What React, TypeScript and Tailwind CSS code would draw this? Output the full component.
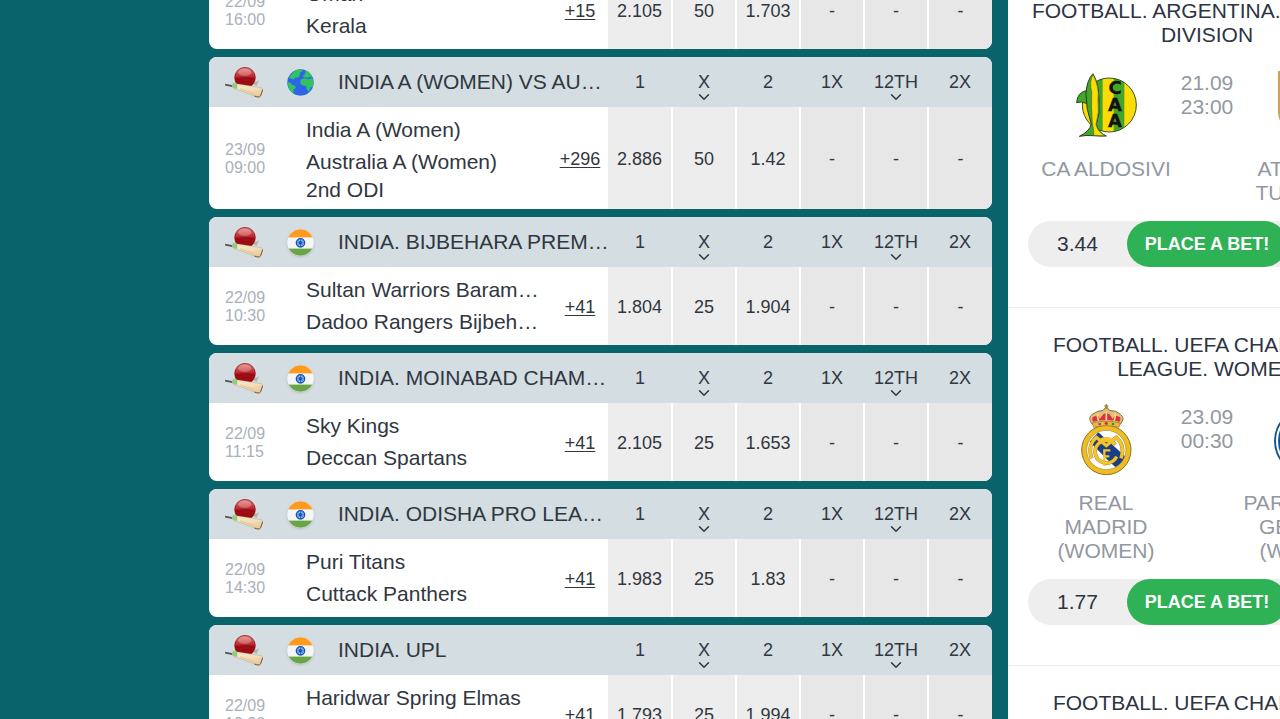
import React from "react";
import { ChevronDown } from "lucide-react";

interface Match {
  league?: string;
  flag?: "india" | "world";
  date: string;
  time: string;
  home: string;
  away: string;
  note?: string;
  more: string;
  odds: string[];
}

interface Promo {
  title: string;
  date: string;
  time: string;
  home: string;
  away: string;
  homeLogo: React.ReactNode;
  awayLogo: React.ReactNode;
  homeOdd: string;
  awayOdd: string;
}

const markets = [
  { label: "1" },
  { label: "X", menu: true },
  { label: "2" },
  { label: "1X" },
  { label: "12TH", menu: true },
  { label: "2X" },
];

const matches: Match[] = [
  { date: "22/09", time: "16:00", home: "Oman", away: "Kerala", more: "+15", odds: ["2.105", "50", "1.703", "-", "-", "-"] },
  { league: "INDIA A (WOMEN) VS AUSTRALIA A (WOMEN)", flag: "world", date: "23/09", time: "09:00", home: "India A (Women)", away: "Australia A (Women)", note: "2nd ODI", more: "+296", odds: ["2.886", "50", "1.42", "-", "-", "-"] },
  { league: "INDIA. BIJBEHARA PREMIER LEAGUE", flag: "india", date: "22/09", time: "10:30", home: "Sultan Warriors Baramulla", away: "Dadoo Rangers Bijbehara", more: "+41", odds: ["1.804", "25", "1.904", "-", "-", "-"] },
  { league: "INDIA. MOINABAD CHAMPIONS LEAGUE", flag: "india", date: "22/09", time: "11:15", home: "Sky Kings", away: "Deccan Spartans", more: "+41", odds: ["2.105", "25", "1.653", "-", "-", "-"] },
  { league: "INDIA. ODISHA PRO LEAGUE", flag: "india", date: "22/09", time: "14:30", home: "Puri Titans", away: "Cuttack Panthers", more: "+41", odds: ["1.983", "25", "1.83", "-", "-", "-"] },
  { league: "INDIA. UPL", flag: "india", date: "22/09", time: "19:30", home: "Haridwar Spring Elmas", away: "Dehradun Warriors", more: "+41", odds: ["1.793", "25", "1.994", "-", "-", "-"] },
];

function CricketIcon() {
  return (
    <svg width="38" height="31" viewBox="0 0 114 93" className="shrink-0" aria-hidden="true">
      <defs>
        <linearGradient id="ball" x1="0" y1="0" x2="0" y2="1">
          <stop offset="0" stopColor="#e07d7a" />
          <stop offset="0.4" stopColor="#bd3034" />
          <stop offset="0.55" stopColor="#a50d15" />
          <stop offset="1" stopColor="#8f0a10" />
        </linearGradient>
        <linearGradient id="bat" x1="0" y1="0" x2="0.3" y2="1">
          <stop offset="0" stopColor="#fbf0d8" />
          <stop offset="1" stopColor="#e8cda0" />
        </linearGradient>
      </defs>
      <path d="M84 50 L102 40 L94 56 Z" fill="#a9b0b2" />
      <circle cx="60" cy="32" r="31" fill="url(#ball)" stroke="#941018" strokeWidth="2" />
      <ellipse cx="59" cy="16" rx="20" ry="11" fill="#fff" opacity="0.25" />
      <path d="M30 38 Q60 28 90 38" stroke="#7d0a10" strokeWidth="2" fill="none" />
      <path d="M0 53 L26 58" stroke="#4d5552" strokeWidth="5" />
      <path d="M22 51 Q27 47 34 50 L108 62 Q114 64 113 70 L107 86 Q104 91 97 90 L26 64 Q20 58 22 51 Z" fill="url(#bat)" stroke="#b08d62" strokeWidth="1" />
      <path d="M113 68 L107 86 Q104 91 97 90 L88 87" stroke="#7f5632" strokeWidth="3" fill="none" />
      <path d="M22 51 Q27 47 37 51 L36 65 L26 64 Q20 58 22 51 Z" fill="#93cc78" />
      <path d="M46 66 L84 79" stroke="#e0b878" strokeWidth="2" />
    </svg>
  );
}

function WorldFlag() {
  return (
    <svg width="27" height="27" viewBox="0 0 84 84" className="shrink-0" aria-hidden="true">
      <circle cx="42" cy="42" r="41" fill="#2c65ea" />
      <path d="M27 5 Q36 1 48 2 L46 9 L39 12 L40 20 L34 27 L27 26 L22 33 L14 30 L6 27 Q13 12 27 5 Z" fill="#33c262" />
      <path d="M1 41 L9 41 L15 48 L25 52 L28 58 L21 64 L20 76 Q3 64 1 41 Z" fill="#33c262" />
      <path d="M57 4 Q74 11 80 27 L70 24 L64 28 L57 25 L52 27 L50 20 L56 16 Z" fill="#33c262" />
      <path d="M45 31 L57 29 L66 32 L76 29 L82 33 Q84 46 80 56 L74 56 L71 66 L66 70 L61 62 L60 52 L51 52 L43 47 L41 38 Z" fill="#33c262" />
    </svg>
  );
}

function IndiaFlag() {
  return (
    <svg width="27" height="27" viewBox="0 0 84 84" className="shrink-0 rounded-full shadow-sm" aria-hidden="true">
      <defs>
        <clipPath id="flagClip">
          <circle cx="42" cy="42" r="41" />
        </clipPath>
      </defs>
      <g clipPath="url(#flagClip)">
        <rect width="84" height="84" fill="#f3f5f6" />
        <rect width="84" height="26" fill="#ff9a1c" />
        <rect y="61" width="84" height="23" fill="#6aa544" />
      </g>
      <circle cx="42" cy="43" r="13" fill="#8fb5e4" stroke="#1154b4" strokeWidth="4" />
      <path d="M42 31 V55 M30 43 H54 M34 35 L50 51 M50 35 L34 51" stroke="#1154b4" strokeWidth="2" />
      <circle cx="42" cy="43" r="5" fill="#1154b4" />
    </svg>
  );
}

function AldosiviLogo() {
  return (
    <svg width="72" height="72" viewBox="15 33 216 216" aria-hidden="true">
      <defs>
        <clipPath id="aldosiviClip">
          <circle cx="133" cy="135" r="81" />
        </clipPath>
      </defs>
      <g clipPath="url(#aldosiviClip)">
        <rect x="50" y="50" width="170" height="170" fill="#fbdc04" />
        <rect x="84" y="50" width="29" height="170" fill="#43a62b" />
        <rect x="146" y="50" width="32" height="170" fill="#43a62b" />
      </g>
      <circle cx="133" cy="135" r="81" fill="none" stroke="#30552a" strokeWidth="3" />
      <path d="M68 91 Q36 96 35 128 Q48 123 64 130 Z" fill="#43a62b" stroke="#273f20" strokeWidth="3" />
      <path d="M84 41 Q64 62 63 104 Q63 148 79 192 Q74 214 43 229 Q64 225 84 227 Q104 229 124 228 Q98 216 94 193 Q106 160 102 122 Q102 72 84 41 Z" fill="#43a62b" stroke="#273f20" strokeWidth="3" />
      <path d="M84 43 Q72 66 80 96 Q78 140 82 192 Q88 213 86 226 Q104 228 120 227 Q98 216 93 193 Q104 156 99 120 Q104 82 84 43 Z" fill="#fbdc04" stroke="#4a6b1c" strokeWidth="2" />
      <g fill="#111" fontFamily="DejaVu Sans, sans-serif" fontWeight="700" fontSize="54" textAnchor="middle" stroke="#111" strokeWidth="1">
        <text x="150" y="103">C</text>
        <text x="150" y="152">A</text>
        <text x="150" y="201">A</text>
      </g>
    </svg>
  );
}

function RealMadridLogo() {
  return (
    <svg width="72" height="72" viewBox="15 30 216 216" className="overflow-visible" aria-hidden="true">
      <defs>
        <clipPath id="madridClip">
          <circle cx="124" cy="165" r="58" />
        </clipPath>
      </defs>
      <circle cx="124" cy="165" r="74" fill="#efbd22" stroke="#8c7426" strokeWidth="3" />
      <circle cx="124" cy="165" r="59" fill="#fff" stroke="#a68625" strokeWidth="2" />
      <g clipPath="url(#madridClip)">
        <path d="M74 140 L100 112 L190 192 L162 225 L137 204 Z" fill="#183e86" />
      </g>
      <g fill="none" stroke="#987a20" strokeWidth="11">
        <path d="M80 190 Q66 152 94 127 L124 152 L154 127 Q182 152 168 190" />
        <path d="M151 149 A34 34 0 1 0 155 185" />
      </g>
      <g fill="none" stroke="#f5c330" strokeWidth="9">
        <path d="M80 190 Q66 152 94 127 L124 152 L154 127 Q182 152 168 190" />
        <path d="M151 149 A34 34 0 1 0 155 185" />
        <path d="M102 139 Q124 121 146 139" />
        <path d="M118 213 V166 H136 M118 184 H133" strokeWidth="7" />
      </g>
      <path d="M82 88 Q66 68 82 58 Q99 46 115 46 L124 34 L133 46 Q155 46 166 58 Q182 69 166 88 Q124 78 82 88 Z" fill="#dfc07a" stroke="#8f7040" strokeWidth="3" />
      <path d="M84 80 Q76 64 94 62 Q101 62 105 72 Q114 54 124 54 Q134 54 143 72 Q147 62 154 62 Q172 64 164 80 Q124 70 84 80 Z" fill="#dd2f3d" />
      <path d="M99 56 Q95 65 101 78 M149 56 Q153 65 147 78 M124 49 V76" stroke="#f4db87" strokeWidth="5" fill="none" />
      <path d="M82 84 Q124 73 166 84 L162 97 Q124 87 86 97 Z" fill="#e7bb39" stroke="#9b7228" strokeWidth="2" />
      <circle cx="104" cy="87" r="4" fill="#7150a0" />
      <circle cx="124" cy="85" r="5" fill="#ce3340" />
      <circle cx="144" cy="87" r="4" fill="#3f8c58" />
      <path d="M124 27 V42 M118 33 H130" stroke="#a88430" strokeWidth="4" />
    </svg>
  );
}

function TucumanLogo() {
  return (
    <svg width="72" height="72" viewBox="0 0 72 72" aria-hidden="true">
      <path d="M6 0 H66 V42 Q64 62 36 72 Q8 62 6 42 Z" fill="#caa35a" />
      <path d="M9 3 H63 V42 Q60 59 36 68 Q12 59 9 42 Z" fill="#fff" />
      <path d="M18 3 H27 V62 L18 56 Z M32 3 H41 V67 H32 Z M46 3 H55 V57 L46 62 Z" fill="#6cb6e4" />
    </svg>
  );
}

function ParisLogo() {
  return (
    <svg width="72" height="72" viewBox="0 0 72 72" aria-hidden="true">
      <circle cx="36" cy="36" r="34" fill="#0d5796" />
      <circle cx="36" cy="36" r="31" fill="none" stroke="#fff" strokeWidth="2" />
      <circle cx="36" cy="36" r="20" fill="#fff" />
      <path d="M34 18 H38 Q37 40 46 54 H26 Q35 40 34 18 Z" fill="#d6233b" />
    </svg>
  );
}

const promos: Promo[] = [
  { title: "FOOTBALL. ARGENTINA. PRIMERA DIVISION", date: "21.09", time: "23:00", home: "CA ALDOSIVI", away: "ATLETICO TUCUMAN", homeLogo: <AldosiviLogo />, awayLogo: <TucumanLogo />, homeOdd: "3.44", awayOdd: "2.35" },
  { title: "FOOTBALL. UEFA CHAMPIONS LEAGUE. WOMEN", date: "23.09", time: "00:30", home: "REAL MADRID (WOMEN)", away: "PARIS SAINT GERMAIN (WOMEN)", homeLogo: <RealMadridLogo />, awayLogo: <ParisLogo />, homeOdd: "1.77", awayOdd: "4.1" },
  { title: "FOOTBALL. UEFA CHAMPIONS LEAGUE. WOMEN", date: "23.09", time: "00:30", home: "REAL MADRID (WOMEN)", away: "PARIS SAINT GERMAIN (WOMEN)", homeLogo: <RealMadridLogo />, awayLogo: <ParisLogo />, homeOdd: "1.77", awayOdd: "4.1" },
];

function MatchCard({ match }: { match: Match }) {
  return (
    <section className="shrink-0 overflow-hidden rounded-lg bg-white">
      <table className="w-full table-fixed border-collapse">
        <colgroup>
          <col className="w-[97px]" />
          <col />
          <col className="w-14" />
          {markets.map((m) => (
            <col key={m.label} className="w-16" />
          ))}
        </colgroup>
        {match.league && (
          <thead className="bg-[#d3dde2]">
            <tr className="h-[50px]">
              <th colSpan={3} scope="colgroup" className="p-0 font-normal">
                <div className="-mr-1 flex items-center gap-6 pl-4">
                  <CricketIcon />
                  {match.flag === "world" ? <WorldFlag /> : <IndiaFlag />}
                  <span className="min-w-0 truncate text-[21px] leading-6">{match.league}</span>
                </div>
              </th>
              {markets.map((m) => (
                <th key={m.label} scope="col" className="p-0 text-center text-lg leading-6 font-normal">
                  {m.menu ? (
                    <button className="relative">
                      {m.label}
                      <ChevronDown size={18} className="absolute top-full left-1/2 -mt-1.5 -translate-x-1/2" />
                    </button>
                  ) : (
                    m.label
                  )}
                </th>
              ))}
            </tr>
          </thead>
        )}
        <tbody>
          <tr>
            <td className="p-0 pt-0.5 pl-4 text-base leading-[18px] text-[#a9b0bb]">
              {match.date}
              <br />
              {match.time}
            </td>
            <td className="py-[7px] pr-3 pl-0 text-[21px]">
              <div className="truncate leading-8">{match.home}</div>
              <div className="truncate leading-8">{match.away}</div>
              {match.note && <div className="truncate leading-6">{match.note}</div>}
            </td>
            <td className="p-0 pt-0.5 text-center text-lg">
              <a href="#more" className="underline underline-offset-2">{match.more}</a>
            </td>
            {match.odds.map((odd, i) => (
              <td
                key={i}
                className={`border-r-2 border-white p-0 pt-0.5 text-center text-lg last:border-r-0 ${i < 3 ? "bg-[#ededed]" : "bg-[#e7e7e7]"}`}
              >
                {odd === "-" ? odd : <button>{odd}</button>}
              </td>
            ))}
          </tr>
        </tbody>
      </table>
    </section>
  );
}

function PromoCard({ promo }: { promo: Promo }) {
  return (
    <section className="border-t border-[#ececec] pt-[25px] pb-10 text-[21px] leading-6">
      <h2 className="px-5 text-center">{promo.title}</h2>
      <div className="mt-6 flex justify-center text-center text-[#9298a1]">
        <div className="w-[136px]">
          <div className="mb-3.5 flex justify-center">{promo.homeLogo}</div>
          {promo.home}
        </div>
        <div className="w-[66px]">
          {promo.date}
          <br />
          {promo.time}
        </div>
        <div className="w-[136px]">
          <div className="mb-3.5 flex justify-center">{promo.awayLogo}</div>
          {promo.away}
        </div>
      </div>
      <div className="mx-5 mt-4 flex items-center rounded-full bg-[#eeeeee] text-center">
        <span className="flex-1">{promo.homeOdd}</span>
        <button className="h-[46px] w-40 rounded-full bg-[#2fb156] text-lg font-bold text-white">PLACE A BET!</button>
        <span className="flex-1">{promo.awayOdd}</span>
      </div>
    </section>
  );
}

export default function App() {
  return (
    <div className="flex h-screen overflow-hidden bg-[#09636b] font-['Liberation_Sans',Arial,sans-serif] text-[#30373f]">
      <main className="-mt-[29px] flex min-w-[1008px] flex-1 flex-col gap-2 pr-4 pl-[209px]">
        {matches.map((match, i) => (
          <MatchCard key={i} match={match} />
        ))}
      </main>
      <aside className="-mt-[27px] w-[398px] shrink-0 bg-white text-[#2d3442]">
        {promos.map((promo, i) => (
          <PromoCard key={i} promo={promo} />
        ))}
      </aside>
    </div>
  );
}
